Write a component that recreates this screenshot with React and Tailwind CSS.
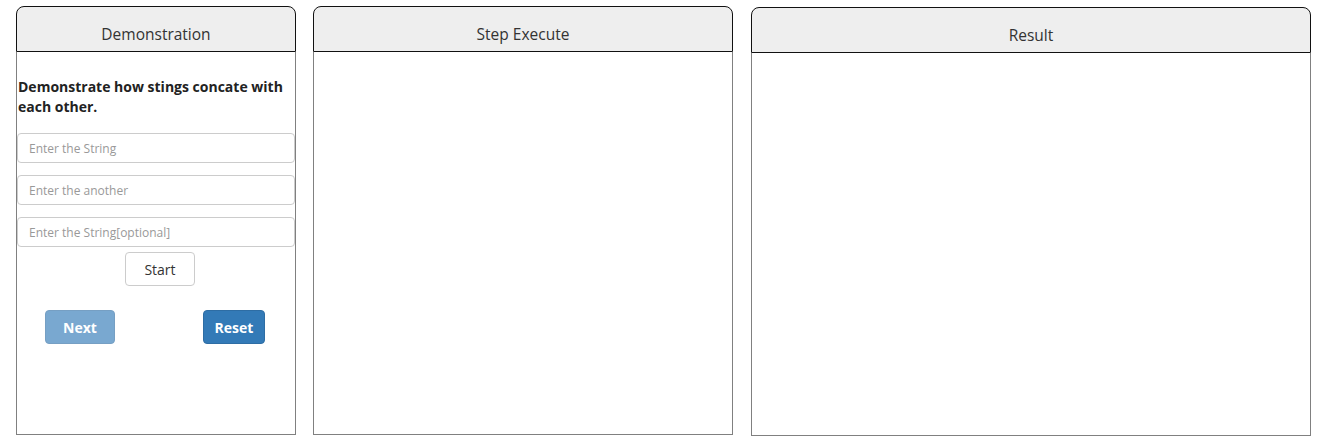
import React from 'react';

const font = { fontFamily: '"Open Sans", "Noto Sans", sans-serif' };

function Panel({ title, width, className = '', children }) {
  return (
    <div className={`flex flex-col h-[429px] ${width} ${className}`}>
      <div className="h-[46px] shrink-0 box-border border border-[#111] rounded-t-[8px] bg-[#eeeeee] pt-[17px] text-center text-[15.5px] leading-[20px] text-[#333]">
        {title}
      </div>
      <div className="flex-1 border-x border-b border-[#808080] bg-white">{children}</div>
    </div>
  );
}

export default function App() {
  return (
    <div className="w-[1330px] h-[437px] bg-white pt-[6px] pl-[16px] flex items-start" style={font}>
      <Panel title="Demonstration" width="w-[280px]">
        <div className="pt-[25px]">
          <p className="text-[14px] leading-[20px] font-bold text-[#222] pl-[1px] pr-[4px]">
            Demonstrate how stings concate with each other.
          </p>
          <div className="mt-[16px] flex flex-col gap-[12px]">
            <input className="h-[30px] w-[278px] box-border border border-[#cccccc] rounded-[4px] px-[11px] text-[12px] text-[#555] placeholder:text-[#999] outline-none" placeholder="Enter the String" />
            <input className="h-[30px] w-[278px] box-border border border-[#cccccc] rounded-[4px] px-[11px] text-[12px] text-[#555] placeholder:text-[#999] outline-none" placeholder="Enter the another" />
            <input className="h-[30px] w-[278px] box-border border border-[#cccccc] rounded-[4px] px-[11px] text-[12px] text-[#555] placeholder:text-[#999] outline-none" placeholder="Enter the String[optional]" />
          </div>
          <div className="mt-[5px] pl-[108px]">
            <button className="w-[70px] h-[34px] box-border border border-[#cccccc] rounded-[4px] bg-white text-[14px] text-[#333]">Start</button>
          </div>
          <div className="mt-[24px] flex pl-[28px]">
            <button className="w-[70px] h-[34px] box-border border border-[#2e6da4] rounded-[4px] bg-[#337ab7] opacity-65 text-[14px] font-bold text-white">Next</button>
            <button className="ml-[88px] w-[62px] h-[34px] box-border border border-[#2e6da4] rounded-[4px] bg-[#337ab7] text-[14px] font-bold text-white">Reset</button>
          </div>
        </div>
      </Panel>
      <Panel title="Step Execute" width="w-[420px]" className="ml-[17px]" />
      <Panel title="Result" width="w-[560px]" className="ml-[18px] mt-[1px]" />
    </div>
  );
}
